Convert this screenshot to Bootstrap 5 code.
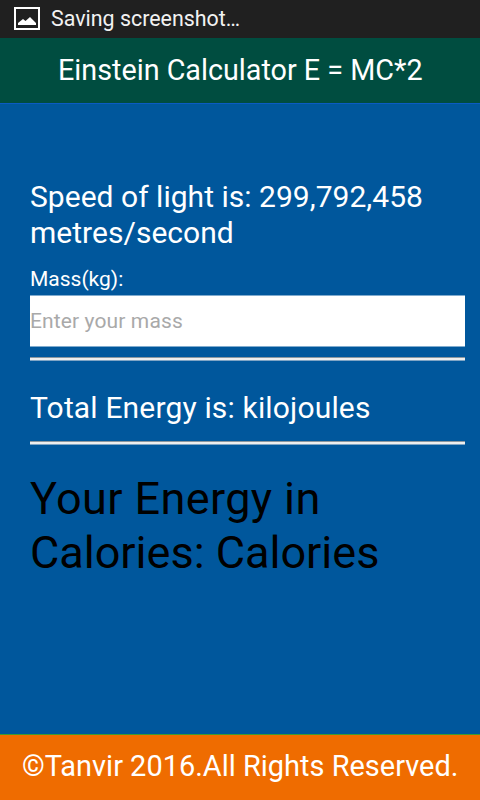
<!DOCTYPE html>
<html lang="en">
<head>
<meta charset="utf-8">
<meta name="viewport" content="width=device-width, initial-scale=1">
<title>Einstein Calculator</title>
<link rel="stylesheet" href="https://cdn.jsdelivr.net/npm/bootstrap@5.3.0/dist/css/bootstrap.min.css">
<style>
body { font-family: Roboto, sans-serif; background: #00579c; color: #fff; height: 800px; }
.status { height: 38px; background: #202020; font-size: 22px; padding-left: 14px; gap: 11px; }
.status-text { color: #f2f2f2; padding-bottom: 2px; transform: scaleX(.973); transform-origin: left; }
.title-bar { height: 66px; background: #004d40; border-bottom: 1px solid #0b5bc4; font-size: 30px; padding-bottom: 2px; }
.title-text { transform: scaleX(.958); }
.calc { padding: 75px 15px 0 30px; }
.speed { font-size: 30px; line-height: 36px; letter-spacing: .03px; }
.mass-label { font-size: 21px; line-height: 26px; margin-top: 15px; }
.mass-input { height: 52px; font-size: 21px; letter-spacing: .12px; border: solid #80abce; border-width: 1px 0; border-radius: 0; padding: 0; margin-top: 3px; }
.mass-input::placeholder { color: #a9a9a9; }
.rule { height: 4px; background: #eee; border-top: 1px solid #8c979f; border-bottom: 1px solid #80a5c5; }
.rule-a { margin-top: 10px; }
.energy { font-size: 30px; line-height: 36px; letter-spacing: .16px; margin-top: 29px; }
.rule-b { margin-top: 15px; }
.calories { font-size: 45px; line-height: 54px; color: #000; margin-top: 27px; }
.calories-lead { letter-spacing: .4px; }
.foot { height: 66px; background: #ef6c00; border-top: 1px solid #3f9a30; font-size: 30px; padding-bottom: 4px; }
.foot-text { transform: scaleX(.965); }
</style>
<script src="https://cdn.jsdelivr.net/npm/bootstrap@5.3.0/dist/js/bootstrap.bundle.min.js"></script>
</head>
<body class="d-flex flex-column overflow-hidden">
<div class="status d-flex align-items-center flex-shrink-0">
<svg width="26" height="24" viewBox="0 0 26 24"><rect x="1" y="1" width="24" height="21" fill="none" stroke="#fff" stroke-width="2"/><path d="M4 18v-2l5-4 2.500 2L16 10l6 6v2z" fill="#fff"/></svg>
<span class="status-text">Saving screenshot…</span></div>
<header class="title-bar d-flex align-items-center justify-content-center text-nowrap flex-shrink-0"><span class="title-text">Einstein Calculator E = MC*2</span></header>
<main class="calc flex-grow-1">
<div class="speed">Speed of light is: 299,792,458 metres/second</div>
<label class="mass-label d-block" for="mass">Mass(kg):</label>
<input id="mass" class="mass-input form-control" placeholder="Enter your mass">
<div class="rule rule-a"></div>
<div class="energy">Total Energy is: kilojoules</div>
<div class="rule rule-b"></div>
<div class="calories"><span class="calories-lead">Your Energy in</span> Calories: Calories</div>
</main>
<footer class="foot d-flex align-items-center justify-content-center text-nowrap flex-shrink-0"><span class="foot-text">©Tanvir 2016.All Rights Reserved.</span></footer>
</body>
</html>
